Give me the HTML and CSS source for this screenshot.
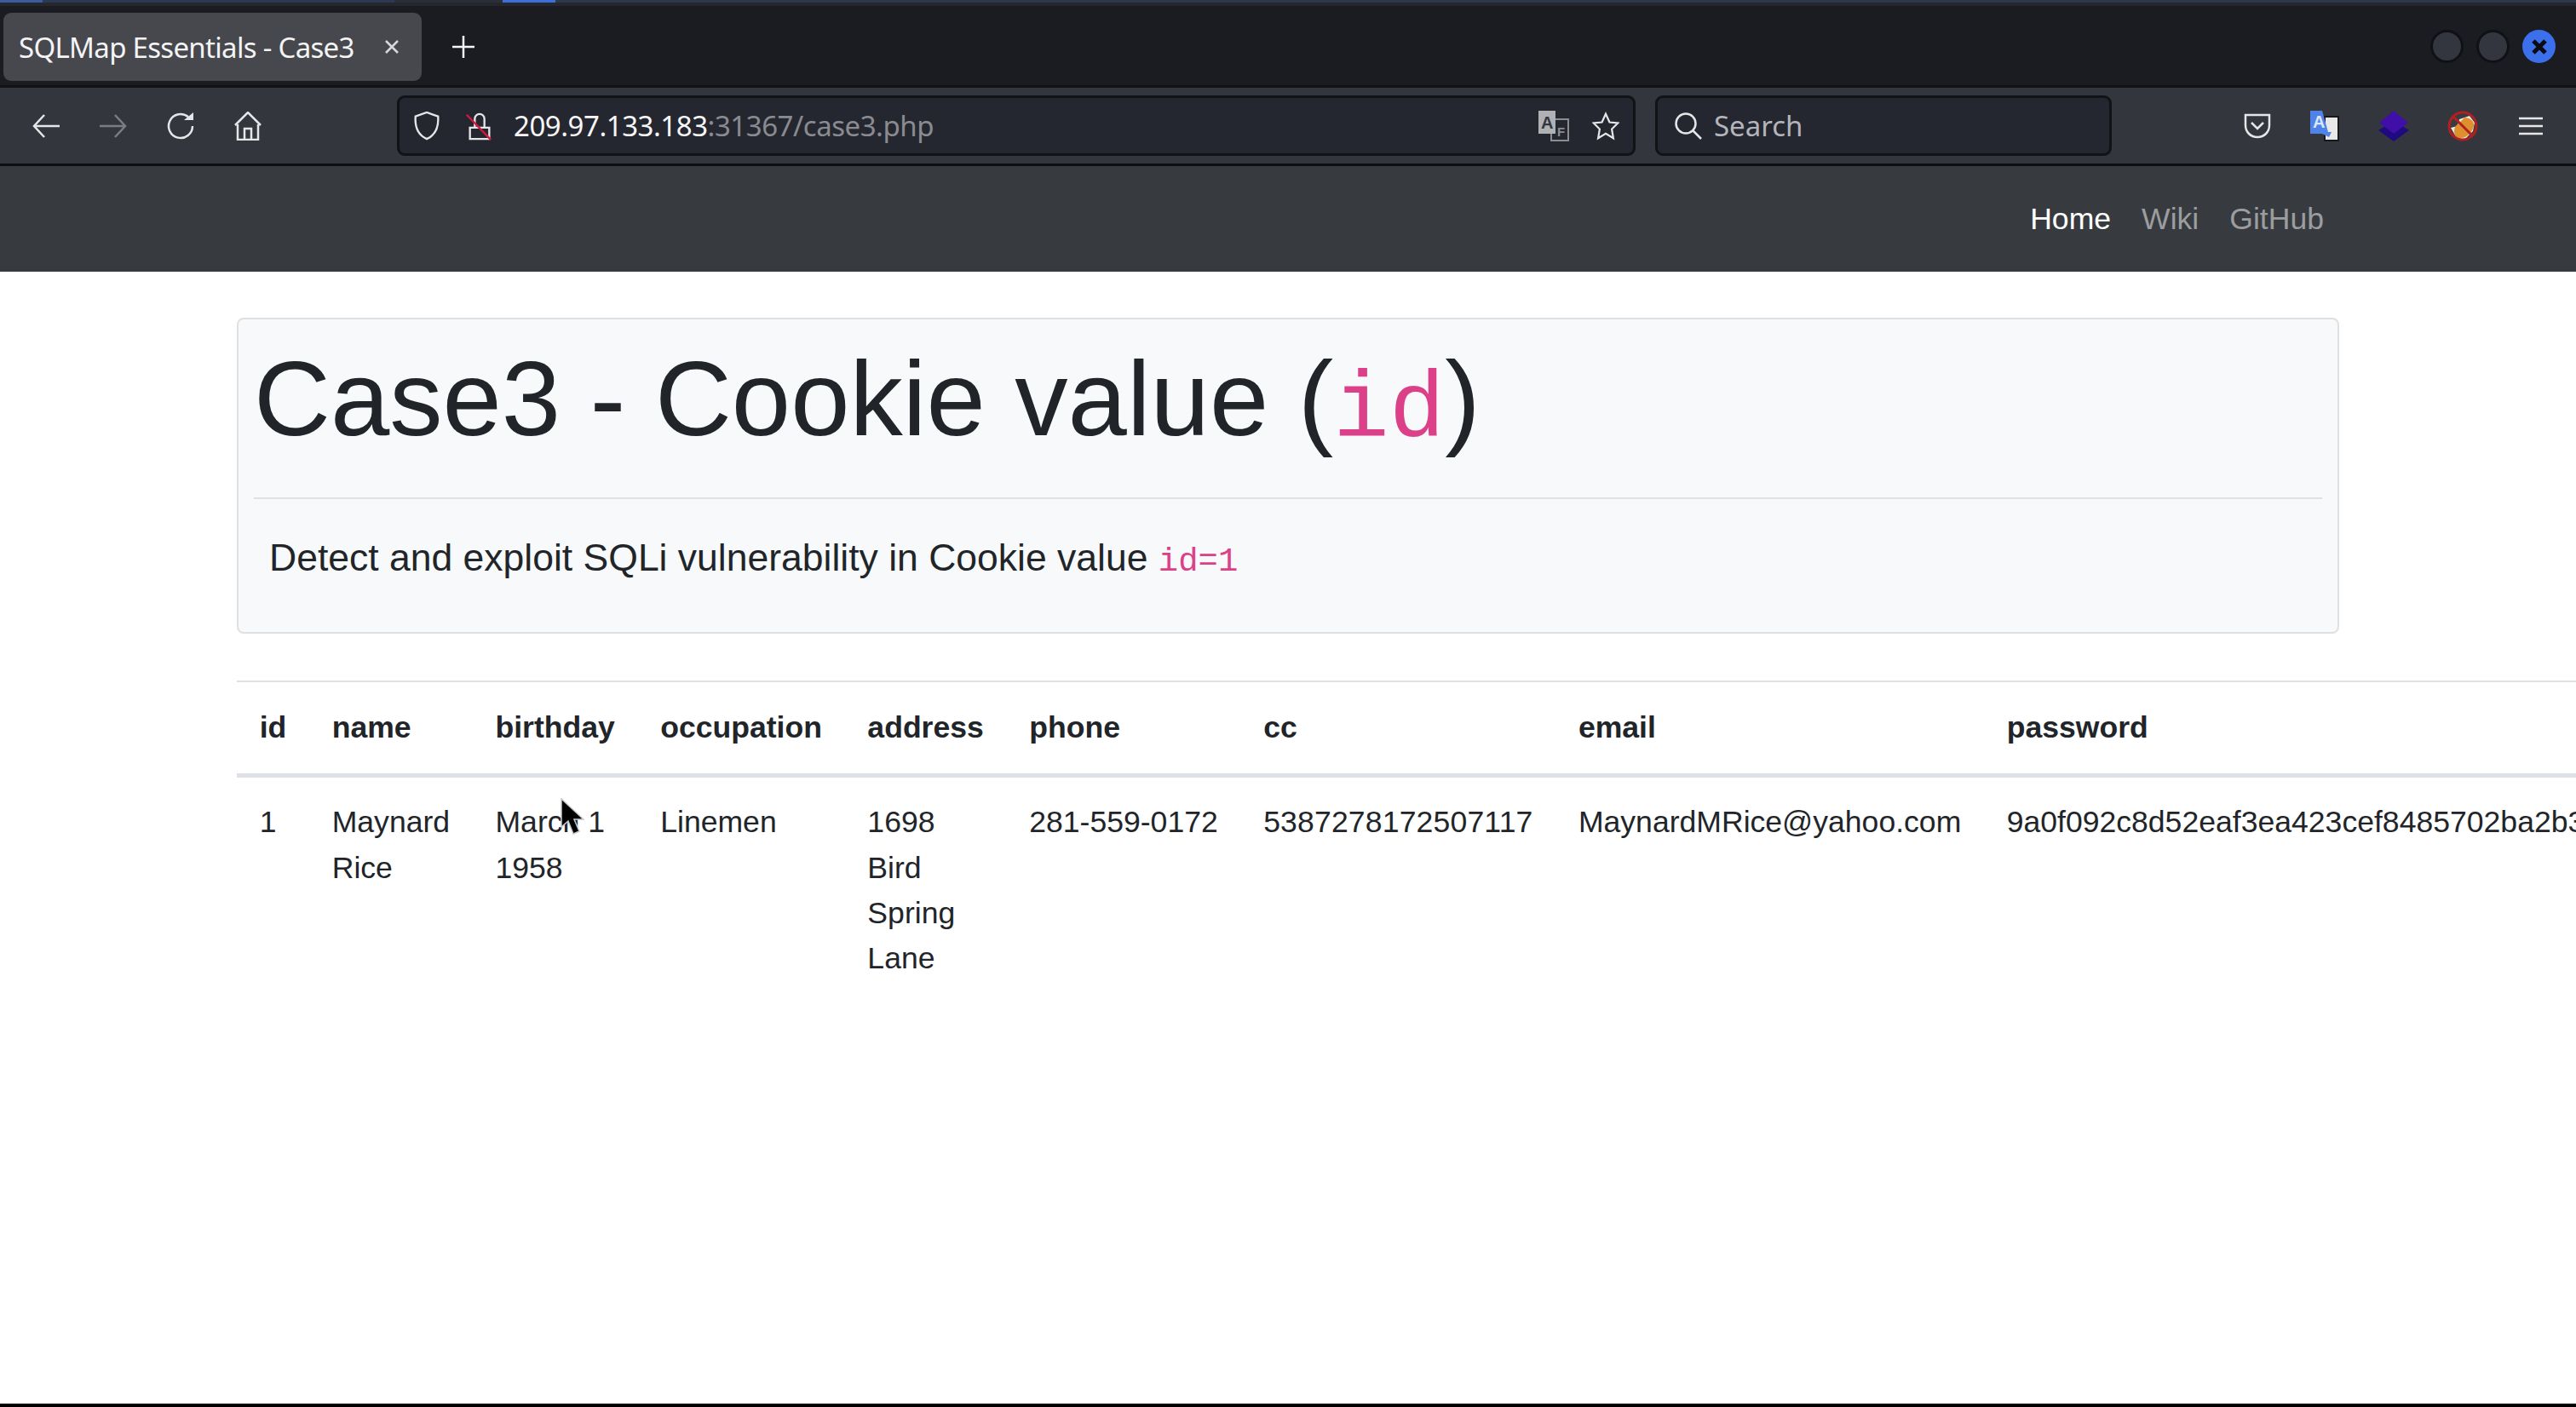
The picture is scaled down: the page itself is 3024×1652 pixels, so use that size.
FILE: index.html
```html
<!DOCTYPE html>
<html lang="en">

<head>
    <meta charset="UTF-8">
    <meta name="viewport" content="width=device-width, initial-scale=1.0">
    <title>SQLMap Essentials - Case3</title>
    <link rel="stylesheet" href="styles.css">
</head>

<body>
    <div class="topStrip">
        <span class="stripTab"></span>
        <span class="stripGap"></span>
        <span class="stripDark"></span>
        <span class="stripActive"></span>
        <span class="stripRest"></span>
    </div>

    <header class="tabBar">
        <div class="tab">
            <span class="tabTitle">SQLMap Essentials - Case3</span>
            <svg class="tabClose" viewBox="0 0 18 18"><path d="M2 2l14 14M16 2L2 16"/></svg>
        </div>
        <svg class="newTab" viewBox="0 0 28 28"><path d="M14 1v26M1 14h26"/></svg>
        <div class="windowButtons">
            <span class="winBtn"></span>
            <span class="winBtn"></span>
            <span class="winBtn winClose">
                <svg viewBox="0 0 18 18"><path d="M2 2l14 14M16 2L2 16"/></svg>
            </span>
        </div>
    </header>

    <nav class="toolbar">
        <div class="navIcons">
            <svg class="icon" viewBox="0 0 32 32"><path d="M32 16H2M14 3L2 16l12 13"/></svg>
            <svg class="icon dim" viewBox="0 0 32 32"><path d="M0 16h30M18 3l12 13-12 13"/></svg>
            <svg class="icon" viewBox="0 0 32 32"><path d="M30 16a14 14 0 1 1-5-10.700"/><path class="solid" d="M20 9h11V0z"/></svg>
            <svg class="icon" viewBox="0 0 32 34"><path d="M1 16L16 1l15 15M4 15v18h24V15M12 33V20h8v13"/></svg>
        </div>

        <div class="urlBar">
            <svg class="icon" viewBox="0 0 32 36"><path d="M16 1l14 5c1 13-3 23-14 28C5 29 1 19 2 6z"/></svg>
            <svg class="icon lockIcon" viewBox="0 0 32 36">
                <path d="M4 20h24v14H4zM10 20v-11a6 6 0 0 1 12 0v11"/>
                <path class="redSlash" d="M0 4l30 31"/>
            </svg>
            <span class="urlText">209.97.133.183<span class="urlMuted">:31367/case3.php</span></span>
            <svg class="translateGrey" viewBox="0 0 36 36">
                <rect x="15" y="10" width="20" height="25" fill="none" stroke="#8b8c90" stroke-width="2"/>
                <rect x="0" y="0" width="20" height="27" fill="#b0b1b4"/>
                <text x="3" y="21" class="iconLetter">A</text>
                <text x="22" y="30" class="iconLetterSmall">F</text>
            </svg>
            <svg class="icon" viewBox="0 0 36 36"><path d="M18 2l5 11 11 1-8 8 2 12-10-6-10 6 2-12-8-8 11-1z"/></svg>
        </div>

        <div class="searchBar">
            <svg class="icon" viewBox="0 0 32 32"><circle cx="13" cy="13" r="11.500"/><path d="M21 21l10 10"/></svg>
            <span class="searchText">Search</span>
        </div>

        <div class="extensions">
            <svg class="icon" viewBox="0 0 32 30"><path d="M2 2h28v12c0 8-6 14-14 14S2 22 2 14z"/><path d="M9 11l7 7 7-7"/></svg>
            <svg class="ext" viewBox="0 0 36 36">
                <rect x="18" y="7" width="16" height="28" fill="#e8e8e8" stroke="#17181c" stroke-width="2"/>
                <path d="M1 0h14l7 25h4l-3 6-8-4H1z" fill="#4f83e8"/>
                <text x="4" y="20" class="iconLetterBlue">A</text>
            </svg>
            <svg class="ext" viewBox="0 0 36 36">
                <path d="M0 23l18-11 18 11-18 13z" fill="#1f0a80"/>
                <path d="M18 0l17 14-17 13L1 14z" fill="#3f0fa8"/>
            </svg>
            <svg class="ext" viewBox="0 0 36 36">
                <circle cx="18" cy="18" r="16" fill="#3a3a40"/>
                <path d="M4 20l8-2 2-8 12-4 6 8-2 10-10 10H12z" fill="#e8eaea"/>
                <path d="M8 24c0-8 8-10 12-16 6 0 12 4 11 10-2 8-9 15-17 14-3 0-6-3-6-8z" fill="#de8f2e"/>
                <circle cx="18" cy="18" r="16" fill="none" stroke="#b1201f" stroke-width="3"/>
                <path d="M7 7l22 22" stroke="#b1201f" stroke-width="3"/>
            </svg>
            <svg class="menuIcon" viewBox="0 0 28 22"><path d="M0 2h28M0 11h28M0 20h28"/></svg>
        </div>
    </nav>

    <div class="siteNav">
        <a class="navLink active" href="#">Home</a>
        <a class="navLink" href="#">Wiki</a>
        <a class="navLink" href="#">GitHub</a>
    </div>

    <main class="container">
        <section class="jumbotron">
            <h1 class="display">Case3 - Cookie value (<code>id</code>)</h1>
            <hr class="divider">
            <p class="lead">Detect and exploit SQLi vulnerability in Cookie value <code>id=1</code></p>
        </section>

        <table class="table">
            <thead>
                <tr>
                    <th>id</th>
                    <th>name</th>
                    <th>birthday</th>
                    <th>occupation</th>
                    <th>address</th>
                    <th>phone</th>
                    <th>cc</th>
                    <th>email</th>
                    <th>password</th>
                </tr>
            </thead>
            <tbody>
                <tr>
                    <td>1</td>
                    <td>Maynard Rice</td>
                    <td>March 1 1958</td>
                    <td>Linemen</td>
                    <td>1698 Bird Spring Lane</td>
                    <td class="noBreak">281-559-0172</td>
                    <td class="ccCell">5387278172507117</td>
                    <td>MaynardMRice@yahoo.com</td>
                    <td>9a0f092c8d52eaf3ea423cef8485702ba2b3</td>
                </tr>
            </tbody>
        </table>
    </main>

    <!-- mouse pointer from the capture -->
    <svg class="cursor" viewBox="0 0 28 44">
        <path d="M1 1v33l8-7 6 15 7-3-6-14h11z"/>
    </svg>

    <div class="bottomEdge"></div>
</body>

</html>
```

FILE: styles.css
```css
* {
    box-sizing: border-box;
}

html, body {
    height: 100%;
}

body {
    margin: 0;
    display: flex;
    flex-direction: column;
    overflow: hidden;
    position: relative;
    background: #fff;
    color: #212529;
    font-family: "Liberation Sans", Arial, sans-serif;
    font-size: 35.6px;
    line-height: 1.5;
}

/* browser chrome */
.topStrip {
    display: flex;
    flex: none;
    height: 7px;
    background: #26272c;
    align-items: flex-start;
}

.topStrip span {
    display: block;
    height: 3px;
}

.stripTab {
    width: 50px;
    background: #3a5c9e;
}

.stripGap {
    width: 413px;
    background: #2a3a55;
}

.stripDark {
    width: 127px;
    background: #2b3038;
}

.stripActive {
    width: 62px;
    background: #3b6fdc;
}

.stripRest {
    flex: 1;
    background: #2a3a4c;
}

.tabBar {
    display: flex;
    align-items: flex-start;
    flex: none;
    height: 96px;
    padding: 8px 24px 0 4px;
    background: #1b1c21;
    border-bottom: 3px solid #121317;
}

.tab {
    display: flex;
    align-items: center;
    width: 491px;
    height: 80px;
    padding: 0 26px 0 18px;
    background: #47484e;
    border-radius: 9px;
}

.tabTitle {
    flex: 1;
    color: #f4f4f5;
    font-family: "Noto Sans", sans-serif;
    font-size: 33px;
    letter-spacing: -0.7px;
    line-height: 1;
    white-space: nowrap;
}

.tabClose {
    width: 18px;
    height: 18px;
    fill: none;
    stroke: #d8d8da;
    stroke-width: 2.500;
}

.newTab {
    width: 28px;
    height: 28px;
    margin: 26px 0 0 35px;
    fill: none;
    stroke: #f4f4f5;
    stroke-width: 2.500;
}

.windowButtons {
    display: flex;
    gap: 15px;
    margin: 20px 0 0 auto;
}

.winBtn {
    display: flex;
    align-items: center;
    justify-content: center;
    width: 39px;
    height: 39px;
    border-radius: 50%;
    background: #34363f;
    border: 3px solid #101114;
}

.winClose {
    background: #3b6fec;
    border: 0;
}

.winClose svg {
    width: 18px;
    height: 18px;
    fill: none;
    stroke: #0b0c10;
    stroke-width: 5;
}

.toolbar {
    display: flex;
    align-items: center;
    flex: none;
    height: 92px;
    padding: 0 39px 0 38px;
    background: #34363e;
    border-bottom: 3px solid #0e0f12;
}

.icon {
    flex: none;
    width: 32px;
    height: 34px;
    fill: none;
    stroke: #e6e6e8;
    stroke-width: 2.500;
}

.icon.dim {
    stroke: #7c7d82;
}

.icon .solid {
    fill: #e6e6e8;
    stroke: none;
}

.navIcons {
    display: flex;
    align-items: center;
    gap: 47px;
    width: 428px;
    flex: none;
}

.urlBar, .searchBar {
    display: flex;
    align-items: center;
    height: 71px;
    background: #252730;
    border: 3px solid #121317;
    border-radius: 9px;
    color: #d8d9dc;
    font-family: "Noto Sans", sans-serif;
    font-size: 33px;
}

.urlBar {
    flex: none;
    width: 1454px;
    padding: 0 16px 0 16px;
}

.lockIcon {
    margin-left: 30px;
}

.redSlash {
    stroke: #d4173f;
    stroke-width: 2.500;
}

.urlText {
    flex: 1;
    margin-left: 24px;
    color: #f6f6f7;
    letter-spacing: -0.47px;
    white-space: nowrap;
}

.urlMuted {
    color: #8a8b90;
}

.translateGrey {
    width: 36px;
    height: 36px;
    margin-right: 27px;
}

.iconLetter {
    font-family: "Liberation Sans", sans-serif;
    font-size: 20px;
    font-weight: bold;
    fill: #34363e;
}

.iconLetterSmall {
    font-family: "Liberation Sans", sans-serif;
    font-size: 15px;
    font-weight: bold;
    fill: #8b8c90;
}

.iconLetterBlue {
    font-family: "Liberation Sans", sans-serif;
    font-size: 20px;
    font-weight: bold;
    fill: #dce6fb;
}

.searchBar {
    flex: none;
    width: 536px;
    margin-left: 23px;
    padding-left: 20px;
}

.searchText {
    margin-left: 14px;
    color: #b4b5ba;
}

.extensions {
    display: flex;
    align-items: center;
    gap: 45px;
    margin-left: auto;
}

.ext {
    width: 36px;
    height: 36px;
}

.menuIcon {
    width: 28px;
    height: 22px;
    fill: none;
    stroke: #e6e6e8;
    stroke-width: 2.500;
    margin-left: 3px;
}

/* page */
.siteNav {
    display: flex;
    justify-content: flex-end;
    align-items: center;
    flex: none;
    gap: 36px;
    height: 124px;
    padding: 2px 296px 0 0;
    background: #373b3f;
}

.navLink {
    color: #9b9d9f;
    text-decoration: none;
}

.navLink.active {
    color: #fff;
}

.container {
    flex: 1;
    min-height: 0;
    width: 2468px;
    margin: 54px 0 0 278px;
}

.jumbotron {
    height: 371px;
    padding: 18px 18px 0;
    background: #f8f9fa;
    border: 2px solid #dfe0e2;
    border-radius: 8px;
}

.display {
    margin: 0;
    font-size: 124.600px;
    font-weight: 300;
    line-height: 1.2;
    white-space: nowrap;
}

code {
    color: #db4089;
    font-family: "Liberation Mono", monospace;
    font-size: 87.5%;
}

.divider {
    margin: 36px 0 36px;
    border: 0;
    border-top: 2px solid #e0e1e3;
}

.lead {
    margin: 0 0 0 18px;
    font-size: 44.500px;
    font-weight: 300;
}

.table {
    width: 100%;
    margin-top: 55px;
    border-collapse: collapse;
}

.table th, .table td {
    padding: 26.700px;
    text-align: left;
    vertical-align: top;
    border-top: 2px solid #dee2e6;
}

.table th {
    border-bottom: 5px solid #dee2e6;
}

.table td {
    border-top: 0;
    line-height: 53.3px;
}

.noBreak {
    white-space: nowrap;
}

.ccCell {
    letter-spacing: 0.15px;
}

.cursor {
    position: absolute;
    left: 658px;
    top: 937px;
    width: 28px;
    height: 44px;
    fill: #000;
    stroke: #c8c8c8;
    stroke-width: 1.500;
}

.bottomEdge {
    flex: none;
    height: 4px;
    background: #000;
}
```
